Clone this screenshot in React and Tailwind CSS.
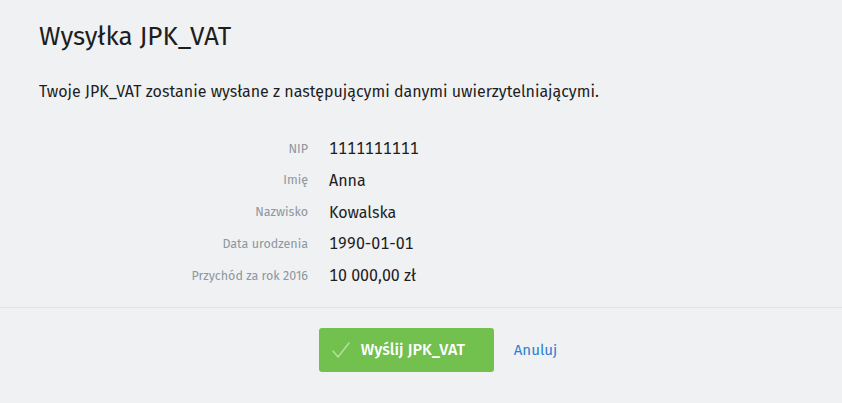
export default function App() {
  const rows = [
    ["NIP", "1111111111"],
    ["Imię", "Anna"],
    ["Nazwisko", "Kowalska"],
    ["Data urodzenia", "1990-01-01"],
    ["Przychód za rok 2016", "10 000,00 zł"],
  ];

  return (
    <div className="w-[842px] h-[403px] bg-[#f0f1f3] text-[#222] font-['Fira_Sans','Noto_Sans',sans-serif]">
      <div className="pl-[39px] pt-[20px]">
        <h1 className="text-[26px] leading-[34px] text-[#1e1e1e]">Wysyłka JPK_VAT</h1>
        <p className="mt-[26px] text-[16px] leading-[24px] text-[#1e1e1e]">
          Twoje JPK_VAT zostanie wysłane z następującymi danymi uwierzytelniającymi.
        </p>
      </div>

      {/* dane */}
      <div className="mt-[33px] flex flex-col gap-[7.75px]">
        {rows.map(([label, value]) => (
          <div key={label} className="flex items-center h-[24px]">
            <span className="w-[308px] text-right text-[12.5px] text-[#8c97a1]">{label}</span>
            <span className="ml-[21px] text-[16px] text-[#1e1e1e] tabular-nums">{value}</span>
          </div>
        ))}
      </div>

      <div className="mt-[19px] border-t border-[#e2e5e9]" />

      <div className="flex items-center justify-center gap-[20px] pt-[20px] pl-[34px]">
        <button className="flex items-center gap-[10px] w-[175px] h-[44px] rounded-[3px] bg-[#72c04e] pl-[12px] text-white text-[16px] font-medium">
          <svg width="20" height="18" viewBox="0 0 20 18" fill="none">
            <path d="M2 10 L7 16 L18 2" stroke="#b0e09a" strokeWidth="1.6" strokeLinecap="round" strokeLinejoin="round" />
          </svg>
          Wyślij JPK_VAT
        </button>
        <a href="#" className="text-[15px] text-[#2a7fd4]">Anuluj</a>
      </div>
    </div>
  );
}
